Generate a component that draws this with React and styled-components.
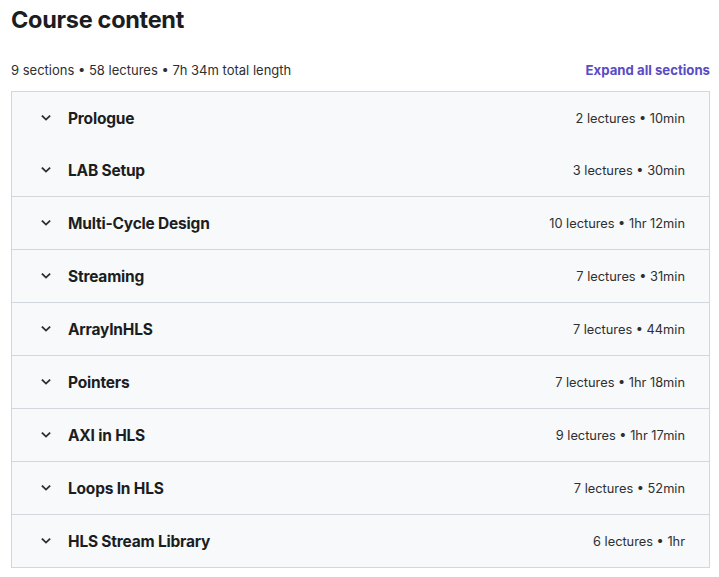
import React from 'react';
import styled, { createGlobalStyle } from 'styled-components';

const GlobalStyle = createGlobalStyle`
  body {
    margin: 0;
    background: #ffffff;
    font-family: Inter, "Noto Sans", sans-serif;
    color: #2d2f31;
  }
`;

const Page = styled.div`
  width: 719px;
  padding: 0 9px 0 11px;
  box-sizing: border-box;
`;

const Title = styled.h2`
  margin: 0;
  padding-top: 5px;
  height: 38px;
  font-size: 23.5px;
  font-weight: 700;
  letter-spacing: -0.3px;
  line-height: 30px;
  color: #1c1d1f;
`;

const Summary = styled.div`
  display: flex;
  align-items: center;
  justify-content: space-between;
  height: 26px;
  margin-top: 14px;
  margin-bottom: 8px;
  font-size: 13px;
`;

const ExpandLink = styled.button`
  border: 0;
  background: none;
  padding: 0;
  font-family: inherit;
  font-size: 13.2px;
  font-weight: 700;
  color: #5a4bc6;
  cursor: pointer;
`;

const Accordion = styled.div`
  border: 1px solid #d1d7dc;
  border-bottom: 0;
`;

const SectionRow = styled.div`
  display: flex;
  align-items: center;
  height: 52px;
  padding: 0 24px 0 28px;
  background: #f7f9fa;
  border-bottom: ${p => (p.$joined ? '0' : '1px solid #d1d7dc')};
`;

const Chevron = styled.span`
  display: flex;
  width: 12px;
  margin-right: 16px;
  color: #2d2f31;
`;

const SectionTitle = styled.span`
  flex: 1;
  font-size: 15.5px;
  font-weight: 700;
  letter-spacing: -0.2px;
  color: #1c1d1f;
`;

const SectionMeta = styled.span`
  font-size: 12.8px;
`;

const sections = [
  { title: 'Prologue', meta: '2 lectures • 10min', joined: true },
  { title: 'LAB Setup', meta: '3 lectures • 30min' },
  { title: 'Multi-Cycle Design', meta: '10 lectures • 1hr 12min' },
  { title: 'Streaming', meta: '7 lectures • 31min' },
  { title: 'ArrayInHLS', meta: '7 lectures • 44min' },
  { title: 'Pointers', meta: '7 lectures • 1hr 18min' },
  { title: 'AXI in HLS', meta: '9 lectures • 1hr 17min' },
  { title: 'Loops In HLS', meta: '7 lectures • 52min' },
  { title: 'HLS Stream Library', meta: '6 lectures • 1hr' },
];

const ChevronIcon = () => (
  <svg width="12" height="12" viewBox="0 0 12 12" fill="none">
    <path d="M2.5 4.2 L6 7.6 L9.5 4.2" stroke="currentColor" strokeWidth="1.8" strokeLinecap="square" />
  </svg>
);

export default function App() {
  return (
    <>
      <GlobalStyle />
      <Page>
        <Title>Course content</Title>
        <Summary>
          <span>9 sections • 58 lectures • 7h 34m total length</span>
          <ExpandLink>Expand all sections</ExpandLink>
        </Summary>
        <Accordion>
          {sections.map(s => (
            <SectionRow key={s.title} $joined={s.joined}>
              <Chevron>
                <ChevronIcon />
              </Chevron>
              <SectionTitle>{s.title}</SectionTitle>
              <SectionMeta>{s.meta}</SectionMeta>
            </SectionRow>
          ))}
        </Accordion>
      </Page>
    </>
  );
}
